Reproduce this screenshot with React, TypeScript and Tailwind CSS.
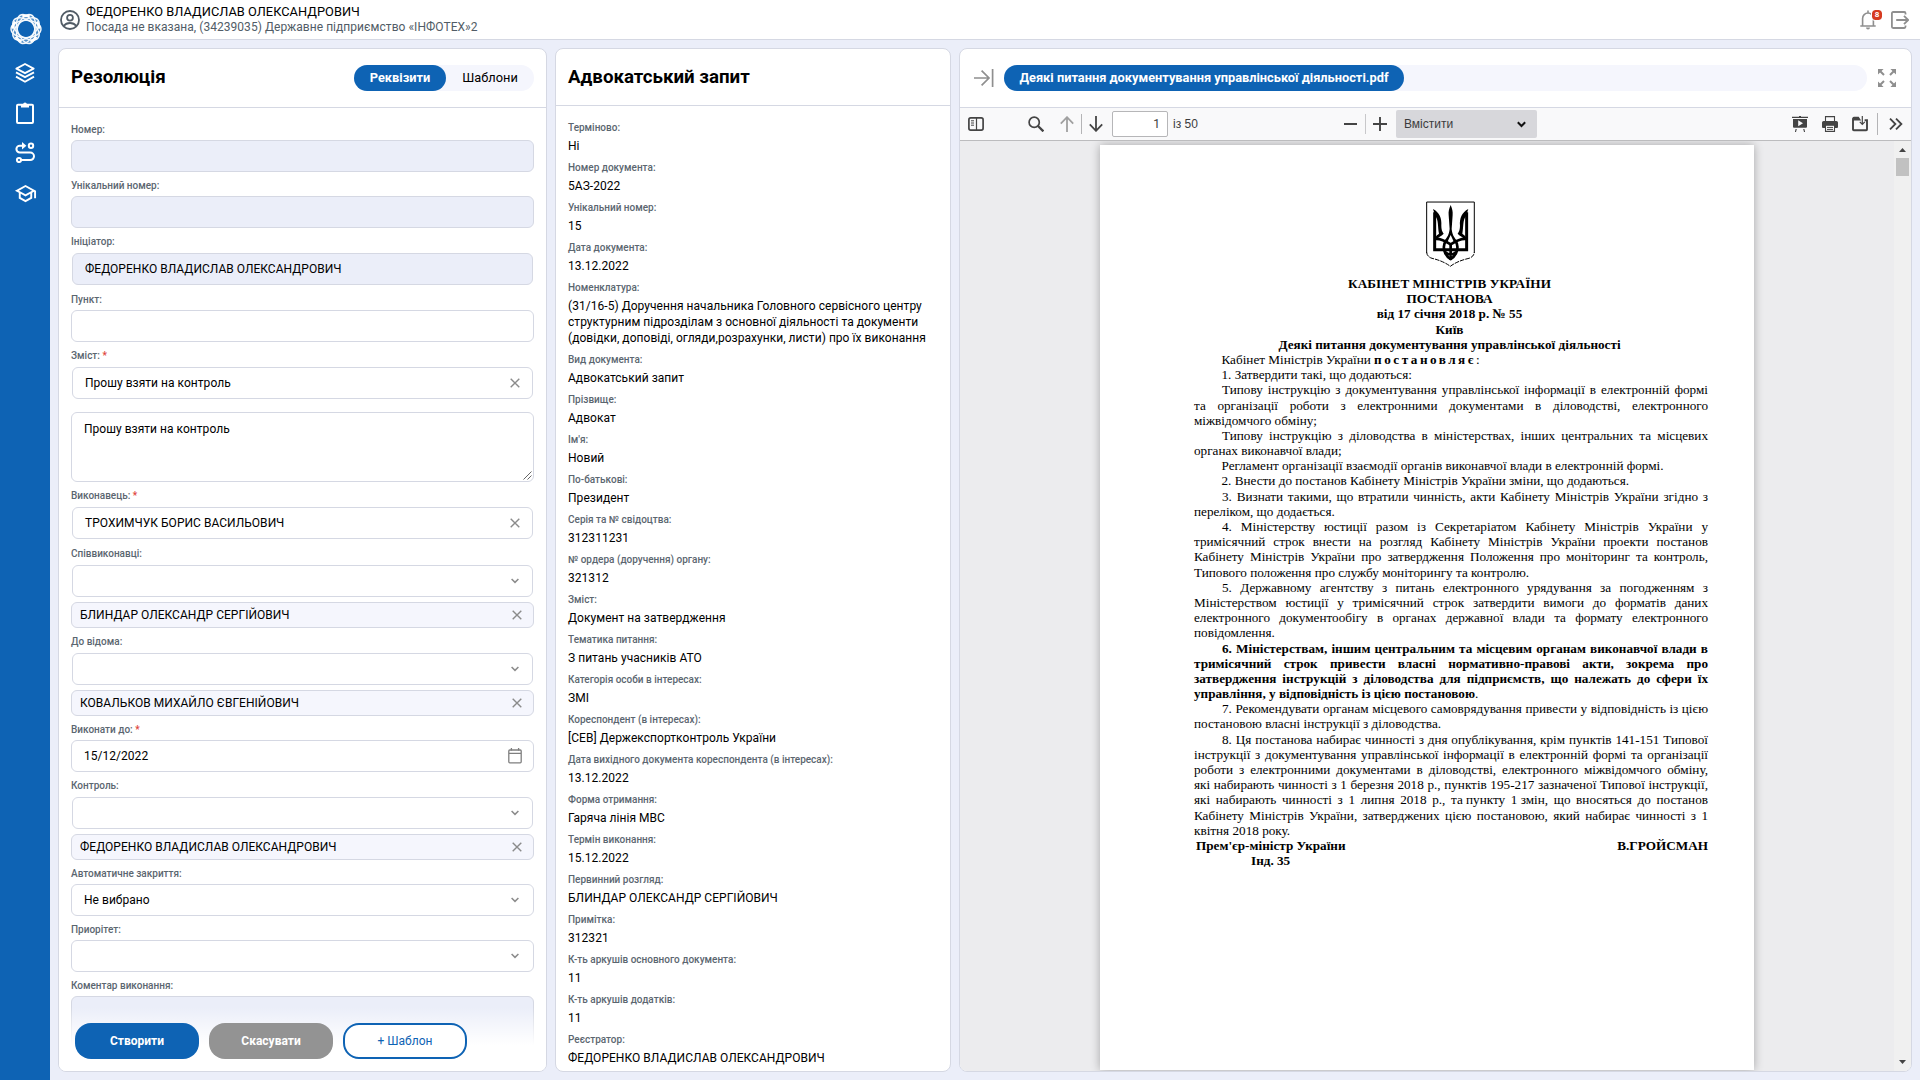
import React from 'react';
import { MdOutlineSchool } from 'react-icons/md';

const NAME = 'ФЕДОРЕНКО ВЛАДИСЛАВ ОЛЕКСАНДРОВИЧ';

function Logo() {
  return (
    <svg width="32" height="32" viewBox="-16 -16 32 32" fill="none" stroke="#fff">
      <circle r="11.5" strokeWidth="6.5" opacity=".3" />
      <g strokeWidth="1.4" opacity=".95">
        {[0, 36, 72, 108, 144].map((a) => (
          <ellipse key={a} rx="15" ry="8.6" transform={`rotate(${a})`} />
        ))}
      </g>
      <g strokeWidth="1.8">
        {[0, 72, 144, 216, 288].map((a) => (
          <path key={a} d="M-3.6 -12.4Q0 -14 3.6 -12.4" strokeWidth="2.6" transform={`rotate(${a})`} />
        ))}
      </g>
    </svg>
  );
}

function Sidebar() {
  return (
    <aside className="flex w-[50px] shrink-0 flex-col items-center bg-[#0e63b4] text-white">
      <div className="mt-[13px] ml-px">
        <Logo />
      </div>
      <svg className="mt-[18px] ml-[-1px]" width="20" height="20" viewBox="0 0 20 20" fill="none" stroke="#fff" strokeWidth="1.9" strokeLinejoin="round">
        <path d="M10 1 18.6 5.600 10 10.200 1.400 5.600Z" />
        <path d="M1 9.400 10 14.200l9-4.800M1 13.600 10 18.800l9-5.200" />
      </svg>
      <svg className="mt-[19px]" width="18" height="22" viewBox="0 0 18 22" fill="none" stroke="#fff" strokeWidth="2">
        <rect x="1" y="2.8" width="16" height="18.2" rx="1" />
        <path d="M5 2h2.6a1.6 1.6 0 0 1 2.8 0H13v3.6H5Z" fill="#fff" stroke="none" />
        <path d="M9 0.4a1.8 1.8 0 0 1 1.8 1.8H7.2A1.8 1.8 0 0 1 9 .4Z" fill="#fff" stroke="none" />
      </svg>
      <svg className="mt-[18px]" width="20" height="21" viewBox="0 0 20 21" fill="none" stroke="#fff" strokeWidth="2">
        <path d="M9 3.7H4.8a3.4 3.4 0 0 0 0 6.8h10.400a3.8 3.8 0 0 1 0 7.600H6" />
        <path d="M7 0 11.400 3.700 7 7.400Z" fill="#fff" stroke="none" />
        <circle cx="16" cy="3.7" r="2.2" />
        <circle cx="4" cy="18" r="2.1" />
      </svg>
      <MdOutlineSchool className="mt-[19px] ml-px" size={23} />
    </aside>
  );
}

function Header() {
  return (
    <header className="flex h-10 shrink-0 items-center border-b border-[#d5d8e3] bg-white pr-[11px] pl-[10px]">
      <svg width="20" height="20" viewBox="0 0 20 20" fill="none" stroke="#515c66" strokeWidth="1.8">
        <circle cx="10" cy="10" r="9" />
        <circle cx="10" cy="7.7" r="2.9" />
        <path d="M3.6 16c1.6-2 3.8-3 6.4-3s4.8 1 6.4 3" />
      </svg>
      <div className="ml-[6px] flex flex-col pb-px">
        <span className="h-[15px] text-[12.8px] leading-[15px] tracking-[0.04px] text-black">{NAME}</span>
        <span className="h-[15px] pt-px text-[12px] leading-[15px] tracking-[0.04px] text-[#515c66]">
          Посада не вказана, (34239035) Державне підприємство «ІНФОТЕХ»2
        </span>
      </div>
      <div className="ml-auto flex items-center">
        <div className="relative mr-[8px] h-5 w-[23px]">
          <svg width="16" height="20" viewBox="0 0 16 20" fill="none" stroke="#8f8f8f" strokeWidth="1.6">
            <path d="M2.6 15.5V8.4a5.4 5.4 0 0 1 10.8 0v7.1M0.3 16h15.4M8 0.5v2.5" />
            <path d="M6 17.6h4a2 2 0 0 1-4 0Z" fill="#8f8f8f" stroke="none" />
          </svg>
          <span className="absolute top-0 left-[12px] h-[10px] w-[10px] rounded-[3px] bg-[#d63a20] text-center text-[8px] leading-[10px] font-bold text-white outline outline-1 outline-white">
            8
          </span>
        </div>
        <svg width="18" height="18" viewBox="0 0 18 18" fill="none" stroke="#8f8f8f" strokeWidth="1.8">
          <path d="M14.5 3.4V2.2A1.2 1.2 0 0 0 13.3 1H2.1A1.2 1.2 0 0 0 .9 2.2v13.6A1.2 1.2 0 0 0 2.1 17h11.2a1.2 1.2 0 0 0 1.2-1.2v-1.2M5.2 9h12M13 4.8 17.2 9 13 13.2" />
        </svg>
      </div>
    </header>
  );
}

const Cross = () => (
  <svg width="10" height="10" viewBox="0 0 10 10" stroke="#8b8b8b" strokeWidth="1.4">
    <path d="M.7.7l8.6 8.6M9.3.7.7 9.3" />
  </svg>
);

const Chevron = () => (
  <svg width="8" height="6" viewBox="0 0 8 6" fill="none" stroke="#8b8b8b" strokeWidth="1.5">
    <path d="M.6 1 4 4.4 7.4 1" />
  </svg>
);

const Calendar = () => (
  <svg className="-mr-px" width="14" height="16" viewBox="0 0 14 16" fill="none" stroke="#7f7f7f" strokeWidth="1.3">
    <rect x=".8" y="2" width="12.4" height="12.8" rx="1" />
    <path d="M1 5.4h12M3.4 0v2.4M10.6 0v2.4" />
  </svg>
);

const Label = ({ text, required }: { text: string; required?: boolean }) => (
  <div className="mt-[6px] mb-0.5 h-4 text-[10px] leading-4 font-medium text-[#5b6670]">
    {text}
    {required && <span className="text-[#e0443a]"> *</span>}
  </div>
);

type FieldProps = {
  label: string;
  value?: string;
  required?: boolean;
  inset?: boolean;
  disabled?: boolean;
  icon?: React.ReactNode;
  chip?: string;
};

function Field({ label, value, required, inset, disabled, icon, chip }: FieldProps) {
  return (
    <div className="flex flex-col">
      <Label text={label} required={required} />
      <div
        className={[
          'flex h-8 items-center justify-between rounded-[6px] border border-[#d5d8e3] pl-3 text-[12px] tracking-[0.03px] text-black',
          inset ? 'm-px pr-[11px]' : 'pr-3',
          disabled ? 'bg-[#ebeef9]' : 'bg-white',
        ].join(' ')}
      >
        <span>{value}</span>
        <span className="flex min-w-[12px] justify-center">{icon}</span>
      </div>
      {chip && (
        <div
          className={[
            'flex h-[26px] items-center justify-between rounded-[6px] border border-[#d5d8e3] bg-[#f5f6fd] pr-[11px] pl-2 text-[12px] tracking-[0.03px] text-black',
            inset ? 'mt-1' : 'mt-[5px]',
          ].join(' ')}
        >
          <span>{chip}</span>
          <Cross />
        </div>
      )}
    </div>
  );
}

function ResolutionPanel() {
  return (
    <section className="relative flex w-[489px] shrink-0 flex-col overflow-hidden rounded-[8px] border border-[#d5d8e3] bg-white">
      <div className="flex h-[59px] shrink-0 items-center justify-between border-b border-[#d5d8e3] px-3">
        <h3 className="pb-px text-[18.72px] font-bold text-black">Резолюція</h3>
        <div className="flex h-[26px] rounded-full bg-[#f5f6fd] text-[12.8px] leading-[26px]">
          <span className="w-[92px] rounded-full bg-[#0e63b4] text-center font-bold text-white">Реквізити</span>
          <span className="w-[88px] text-center text-black">Шаблони</span>
        </div>
      </div>
      <div className="min-h-0 flex-1 overflow-hidden px-3 pt-2">
        <Field label="Номер:" disabled />
        <Field label="Унікальний номер:" disabled />
        <Field label="Ініціатор:" value={NAME} inset disabled />
        <Field label="Пункт:" />
        <Field label="Зміст:" required value="Прошу взяти на контроль" inset icon={<Cross />} />
        <div className="relative mt-3 h-[70px] rounded-[6px] border border-[#d5d8e3] px-3 pt-2 text-[12px] leading-4 tracking-[0.03px] text-black">
          Прошу взяти на контроль
          <svg className="absolute right-[1px] bottom-[1px]" width="9" height="9" viewBox="0 0 9 9" stroke="#555" strokeWidth=".9">
            <path d="M.5 8.5l8-8M4.5 8.5l4-4" />
          </svg>
        </div>
        <Field label="Виконавець:" required value="ТРОХИМЧУК БОРИС ВАСИЛЬОВИЧ" inset icon={<Cross />} />
        <Field label="Співвиконавці:" inset icon={<Chevron />} chip="БЛИНДАР ОЛЕКСАНДР СЕРГІЙОВИЧ" />
        <Field label="До відома:" inset icon={<Chevron />} chip="КОВАЛЬКОВ МИХАЙЛО ЄВГЕНІЙОВИЧ" />
        <Field label="Виконати до:" required value="15/12/2022" icon={<Calendar />} />
        <Field label="Контроль:" inset icon={<Chevron />} chip={NAME} />
        <Field label="Автоматичне закриття:" value="Не вибрано" icon={<Chevron />} />
        <Field label="Приорітет:" icon={<Chevron />} />
        <Label text="Коментар виконання:" />
        <div className="h-[90px] rounded-[6px] border border-[#d5d8e3] bg-[#ebeef9]" />
      </div>
      <div className="absolute inset-x-0 bottom-0 flex h-[64px] gap-[10px] bg-linear-to-b from-white/0 to-white to-[38px] pt-4 pl-4 text-[12px]">
        <button className="h-9 w-[124px] rounded-[16px] bg-[#0e63b4] font-bold text-white">Створити</button>
        <button className="h-9 w-[124px] rounded-[16px] bg-[#939393] font-bold text-white">Скасувати</button>
        <button className="h-9 w-[124px] rounded-[16px] border-2 border-[#0e63b4] bg-white text-[#0e63b4]">+ Шаблон</button>
      </div>
    </section>
  );
}

const DETAILS: [string, string[]][] = [
  ['Терміново:', ['Ні']],
  ['Номер документа:', ['5АЗ-2022']],
  ['Унікальний номер:', ['15']],
  ['Дата документа:', ['13.12.2022']],
  [
    'Номенклатура:',
    [
      '(31/16-5) Доручення начальника Головного сервісного центру',
      'структурним підрозділам з основної діяльності та документи',
      '(довідки, доповіді, огляди,розрахунки, листи) про їх виконання',
    ],
  ],
  ['Вид документа:', ['Адвокатський запит']],
  ['Прізвище:', ['Адвокат']],
  ["Ім'я:", ['Новий']],
  ['По-батькові:', ['Президент']],
  ['Серія та № свідоцтва:', ['312311231']],
  ['№ ордера (доручення) органу:', ['321312']],
  ['Зміст:', ['Документ на затвердження']],
  ['Тематика питання:', ['З питань учасників АТО']],
  ['Категорія особи в інтересах:', ['ЗМІ']],
  ['Кореспондент (в інтересах):', ['[СЕВ] Держекспортконтроль України']],
  ['Дата вихідного документа кореспондента (в інтересах):', ['13.12.2022']],
  ['Форма отримання:', ['Гаряча лінія МВС']],
  ['Термін виконання:', ['15.12.2022']],
  ['Первинний розгляд:', ['БЛИНДАР ОЛЕКСАНДР СЕРГІЙОВИЧ']],
  ['Примітка:', ['312321']],
  ['К-ть аркушів основного документа:', ['11']],
  ['К-ть аркушів додатків:', ['11']],
  ['Реєстратор:', [NAME]],
];

function DetailsPanel() {
  return (
    <section className="flex w-[396px] shrink-0 flex-col overflow-hidden rounded-[8px] border border-[#d5d8e3] bg-white">
      <div className="flex h-[57px] shrink-0 items-center border-b border-[#d5d8e3] px-3 pt-px">
        <h3 className="text-[18.72px] font-bold text-black">Адвокатський запит</h3>
      </div>
      <dl className="min-h-0 flex-1 overflow-hidden px-3 pt-[14px]">
        {DETAILS.map(([k, lines]) => (
          <div key={k} className="mb-[6px]">
            <dt className="mb-0.5 h-4 text-[10px] leading-4 font-medium text-[#5b6670]">{k}</dt>
            <dd className="text-[12px] leading-4 tracking-[0.04px] text-black">
              {lines.map((l) => (
                <div key={l} className="whitespace-nowrap">{l}</div>
              ))}
            </dd>
          </div>
        ))}
      </dl>
    </section>
  );
}

function PdfToolbar() {
  return (
    <div className="flex h-[33px] shrink-0 items-center border-b border-[#bcbcbe] bg-[#f9f9fa] text-[12px] text-[#3c3c3d]">
      <svg className="ml-2" width="16" height="14" viewBox="0 0 16 14" fill="none" stroke="#444" strokeWidth="1.7">
        <rect x=".9" y=".9" width="14.2" height="12.2" rx="1.8" />
        <path d="M8.5 1v12" strokeWidth="1.2" />
        <path d="M3 3.8h3M3 6h3M3 8.2h3" strokeWidth="1" />
      </svg>
      <svg className="ml-11" width="16" height="16" viewBox="0 0 16 16" fill="none" stroke="#444" strokeWidth="2">
        <circle cx="6.2" cy="6.2" r="5.1" strokeWidth="1.7" />
        <path d="M10 10l5.4 5.4" strokeWidth="2.3" />
      </svg>
      <svg className="ml-4" width="14" height="16" viewBox="0 0 14 16" fill="none" stroke="#a0a0a0" strokeWidth="1.8">
        <path d="M7 16V1.2M.8 7.6 7 1.2l6.2 6.4" />
      </svg>
      <span className="ml-[7px] h-5 w-px bg-[#b4b4b6]" />
      <svg className="ml-[7px]" width="14" height="16" viewBox="0 0 14 16" fill="none" stroke="#444" strokeWidth="1.8">
        <path d="M7 0v14.8M.8 8.4 7 14.8l6.2-6.4" />
      </svg>
      <div className="ml-[9px] h-[26px] w-14 rounded-[2px] border border-[#b6b6b8] bg-white pr-[7px] text-right leading-6">1</div>
      <span className="ml-[5px] w-[30px] font-['Liberation_Sans',sans-serif]">із 50</span>
      <span className="ml-[141px] h-[2px] w-[13px] bg-[#444]" />
      <span className="ml-2 h-5 w-px bg-[#c8c8ca]" />
      <svg className="ml-[7px]" width="14" height="14" viewBox="0 0 14 14" stroke="#444" strokeWidth="1.9">
        <path d="M0 7h14M7 0v14" />
      </svg>
      <div className="ml-[9px] flex h-7 w-[141px] items-center justify-between rounded-[2px] bg-[#d7d7db] pr-[11px] pl-2">
        <span className="font-['Liberation_Sans',sans-serif]">Вмістити</span>
        <svg width="9" height="7" viewBox="0 0 9 7" fill="none" stroke="#111" strokeWidth="2">
          <path d="M.8 1.2 4.5 5 8.2 1.2" />
        </svg>
      </div>
      <svg className="ml-auto" width="16" height="16" viewBox="0 0 16 16" fill="#444">
        <path d="M0 .8h7V0h2v.8h7v1.2H0ZM1 3h14v7.8a1 1 0 0 1-1 1H2a1 1 0 0 1-1-1ZM6.2 4.3v6L11 7.3ZM3.6 13h1.2l-.8 3H2.9ZM11.2 13h1.2l.7 3H12Z" fillRule="evenodd" />
      </svg>
      <svg className="ml-[14px]" width="16" height="16" viewBox="0 0 16 16">
        <path d="M3.5 5V.6h9V5" fill="none" stroke="#444" strokeWidth="1.1" />
        <path d="M1.6 5h12.8A1.6 1.6 0 0 1 16 6.6V11a1 1 0 0 1-1 1H1a1 1 0 0 1-1-1V6.600A1.600 1.600 0 0 1 1.600 5Z" fill="#444" />
        <path d="M3.5 9.200h9v6.200h-9Z" fill="#fff" stroke="#444" strokeWidth="1.1" />
        <path d="M5 11.400h6M5 13.400h6" stroke="#444" />
      </svg>
      <svg className="ml-[14px]" width="16" height="16" viewBox="0 0 16 16" fill="none" stroke="#444" strokeWidth="1.9">
        <path d="M1 4.300V2.800A1 1 0 0 1 2 1.800H6.200L7.400 3.600H1V13.400a.8.8 0 0 0 .8.8h12.400a.8.8 0 0 0 .8-.8V4.300h-2.400" />
        <path d="M10.300 0v8M7.800 5.800l2.500 2.500 2.500-2.500" strokeWidth="1.200" />
      </svg>
      <span className="ml-[9px] h-[22px] w-px bg-[#b4b4b6]" />
      <svg className="mr-[8px] ml-[11px]" width="14" height="12" viewBox="0 0 14 12" fill="none" stroke="#444" strokeWidth="1.8">
        <path d="M1 .6 6.400 6 1 11.400M7 .6 12.400 6 7 11.400" />
      </svg>
    </div>
  );
}

const Trident = () => (
  <svg width="49.300" height="66.700" viewBox="78 32 148 200" fill="none" stroke="#000">
    <path d="M80 188V35H223V188" strokeWidth="3" />
    <path d="M80 186Q81 199 96 204Q130 212 151 228Q172 212 207 204Q222 199 223 186" strokeWidth="3" strokeDasharray="14 3" />
    <path d="M104 66V178H200V66" strokeWidth="9" strokeLinejoin="miter" />
    <path d="M99 56C118 66 126 84 124 106C124 116 126 124 131 130C124 138 114 140 108 150L104 144C108 136 114 132 117 130C113 110 116 88 106 78Z" fill="#000" stroke="none" />
    <path d="M205 56C186 66 178 84 180 106C180 116 178 124 173 130C180 138 190 140 196 150L200 144C196 136 190 132 187 130C191 110 188 88 198 78Z" fill="#000" stroke="none" />
    <path d="M152 44C157 56 159 64 158 74L155 116C157 134 162 140 170 150L162 156L152 134L142 156L134 150C142 140 147 134 149 116L146 74C145 64 147 56 152 44Z" fill="#000" stroke="none" />
    <path d="M106 146C122 144 136 152 152 162C168 152 182 144 198 146" strokeWidth="8" />
    <path d="M139 150C124 168 134 196 152 206C170 196 180 168 165 150" strokeWidth="8" />
    <path d="M152 160V208M136 186Q152 200 168 186" strokeWidth="8" />
  </svg>
);

type Line = { t: React.ReactNode; k: 'i' | 'ij' | 'j' | 'l'; b?: boolean };
const LINES: Line[] = [
  { t: <>Кабінет Міністрів України <b className="tracking-[2.5px]">постановляє</b>:</>, k: 'i' },
  { t: '1. Затвердити такі, що додаються:', k: 'i' },
  { t: 'Типову інструкцію з документування управлінської інформації в електронній формі', k: 'ij' },
  { t: 'та організації роботи з електронними документами в діловодстві, електронного', k: 'j' },
  { t: 'міжвідомчого обміну;', k: 'l' },
  { t: 'Типову інструкцію з діловодства в міністерствах, інших центральних та місцевих', k: 'ij' },
  { t: 'органах виконавчої влади;', k: 'l' },
  { t: 'Регламент організації взаємодії органів виконавчої влади в електронній формі.', k: 'i' },
  { t: '2. Внести до постанов Кабінету Міністрів України зміни, що додаються.', k: 'i' },
  { t: '3. Визнати такими, що втратили чинність, акти Кабінету Міністрів України згідно з', k: 'ij' },
  { t: 'переліком, що додається.', k: 'l' },
  { t: '4. Міністерству юстиції разом із Секретаріатом Кабінету Міністрів України у', k: 'ij' },
  { t: 'тримісячний строк внести на розгляд Кабінету Міністрів України проекти постанов', k: 'j' },
  { t: 'Кабінету Міністрів України про затвердження Положення про моніторинг та контроль,', k: 'j' },
  { t: 'Типового положення про службу моніторингу та контролю.', k: 'l' },
  { t: '5. Державному агентству з питань електронного урядування за погодженням з', k: 'ij' },
  { t: 'Міністерством юстиції у тримісячний строк затвердити вимоги до форматів даних', k: 'j' },
  { t: 'електронного документообігу в органах державної влади та формату електронного', k: 'j' },
  { t: 'повідомлення.', k: 'l' },
  { t: '6. Міністерствам, іншим центральним та місцевим органам виконавчої влади в', k: 'ij', b: true },
  { t: 'тримісячний строк привести власні нормативно-правові акти, зокрема про', k: 'j', b: true },
  { t: 'затвердження інструкцій з діловодства для підприємств, що належать до сфери їх', k: 'j', b: true },
  { t: <><b>управління, у відповідність із цією постановою</b>.</>, k: 'l' },
  { t: '7. Рекомендувати органам місцевого самоврядування привести у відповідність із цією', k: 'ij' },
  { t: 'постановою власні інструкції з діловодства.', k: 'l' },
  { t: '8. Ця постанова набирає чинності з дня опублікування, крім пунктів 141-151 Типової', k: 'ij' },
  { t: 'інструкції з документування управлінської інформації в електронній формі та організації', k: 'j' },
  { t: 'роботи з електронними документами в діловодстві, електронного міжвідомчого обміну,', k: 'j' },
  { t: 'які набирають чинності з 1 березня 2018 р., пунктів 195-217 зазначеної Типової інструкції,', k: 'j' },
  {
    t: <>які набирають чинності з 1 липня 2018 р., <span className="inline-block">та пункту</span> <span className="inline-block">1 змін,</span> що вносяться до постанов</>,
    k: 'j',
  },
  { t: 'Кабінету Міністрів України, затверджених цією постановою, який набирає чинності з 1', k: 'j' },
  { t: 'квітня 2018 року.', k: 'l' },
];
const KIND = {
  i: 'pl-[27.5px]',
  ij: 'pl-7 text-justify [text-align-last:justify]',
  j: 'text-justify [text-align-last:justify]',
  l: '',
};

function PdfPage() {
  return (
    <article className="h-[925px] w-[654px] bg-white shadow-[0_0_9px_rgba(0,0,0,0.3)]">
      <div className="ml-[94px] w-[514px] pt-14 font-['Liberation_Serif',serif] text-[13.2px] leading-[15.18px] text-black">
        <div className="flex h-[75px] justify-center">
          <Trident />
        </div>
        <div className="-ml-[3px] text-center font-bold">
          <p className="tracking-[0.06px] whitespace-nowrap">КАБІНЕТ МІНІСТРІВ УКРАЇНИ</p>
          <p>ПОСТАНОВА</p>
          <p>від 17 січня 2018 р. № 55</p>
          <p>Київ</p>
          <p>Деякі питання документування управлінської діяльності</p>
        </div>
        {LINES.map((l, i) => (
          <p key={i} className={['whitespace-nowrap', KIND[l.k], l.b ? 'font-bold' : ''].join(' ')}>
            {l.t}
          </p>
        ))}
        <div className="flex justify-between pl-[2px] font-bold">
          <span>Прем'єр-міністр України</span>
          <span>В.ГРОЙСМАН</span>
        </div>
        <p className="pl-[57px] font-bold">Інд. 35</p>
      </div>
    </article>
  );
}

function PdfPanel() {
  return (
    <section className="flex min-w-0 flex-1 flex-col overflow-hidden rounded-[8px] border border-[#d5d8e3] bg-white">
      <div className="flex h-[59px] shrink-0 items-center border-b border-[#d5d8e3] pr-[15px] pl-[14px]">
        <svg width="20" height="18" viewBox="0 0 20 18" fill="none" stroke="#8f8f8f" strokeWidth="1.700">
          <path d="M0 9h15M7.600 1.600 15 9l-7.400 7.400M18.600 0v18" />
        </svg>
        <div className="ml-[10px] flex h-[26px] flex-1 rounded-full bg-[#f5f6fd]">
          <span className="w-[400px] rounded-full bg-[#0e63b4] text-center text-[12.8px] leading-[26px] font-bold whitespace-nowrap text-white">
            Деякі питання документування управлінської діяльності.pdf
          </span>
        </div>
        <svg className="ml-[11px]" width="18" height="18" viewBox="0 0 18 18" fill="#8f8f8f" stroke="#8f8f8f" strokeWidth="2">
          <path d="M0 0h5.600L0 5.600ZM18 0v5.600L12.400 0ZM0 18v-5.600L5.600 18ZM18 18h-5.600l5.600-5.600Z" stroke="none" />
          <path d="M2 2l4 4M16 2l-4 4M2 16l4-4M16 16l-4-4" />
        </svg>
      </div>
      <PdfToolbar />
      <div className="flex min-h-0 flex-1 overflow-hidden bg-[#ececee]">
        <div className="min-w-0 flex-1 overflow-hidden pt-1 pl-[140px]">
          <PdfPage />
        </div>
        <div className="flex w-[17px] shrink-0 flex-col items-center bg-[#f0f0f0]">
          <svg className="mt-[7px]" width="7" height="4" viewBox="0 0 7 4" fill="#444">
            <path d="M0 4 3.500 0 7 4Z" />
          </svg>
          <span className="mt-[6px] h-[18px] w-[13px] bg-[#c1c1c1]" />
          <svg className="mt-auto mb-[7px]" width="7" height="4" viewBox="0 0 7 4" fill="#444">
            <path d="M0 0h7L3.500 4Z" />
          </svg>
        </div>
      </div>
    </section>
  );
}

export default function App() {
  return (
    <div className="flex h-[1080px] w-[1920px] overflow-hidden bg-[#ebeef9] font-['Roboto',sans-serif]">
      <Sidebar />
      <div className="flex min-w-0 flex-1 flex-col">
        <Header />
        <main className="flex min-h-0 flex-1 gap-2 p-2">
          <ResolutionPanel />
          <DetailsPanel />
          <PdfPanel />
        </main>
      </div>
    </div>
  );
}
